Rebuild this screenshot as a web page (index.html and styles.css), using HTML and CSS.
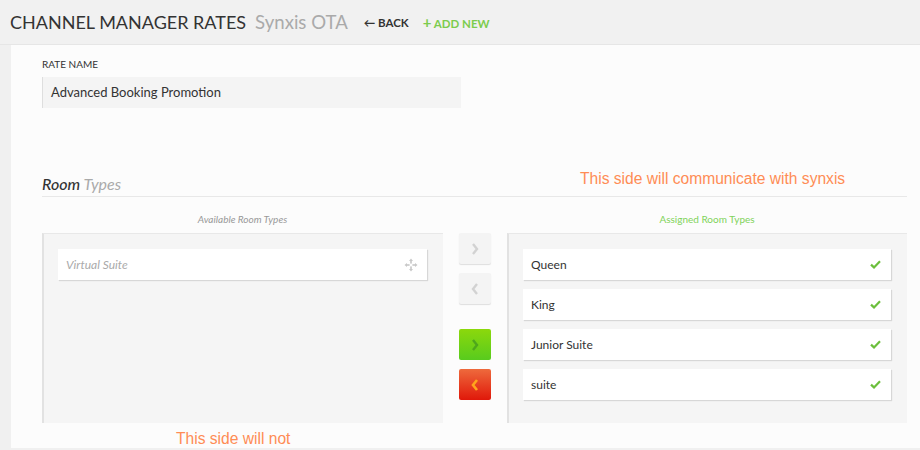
FILE: index.html
```html
<!DOCTYPE html>
<html>
<head>
<meta charset="utf-8">
<link rel="stylesheet" href="styles.css">
</head>
<body>
<header class="topbar">
  <h1 class="title">CHANNEL MANAGER RATES</h1>
  <span class="subtitle">Synxis OTA</span>
  <a class="back">&#8592; BACK</a>
  <a class="addnew"><span class="plus">+</span> ADD NEW</a>
</header>
<main class="panel">
  <div class="field">
    <label class="label">RATE NAME</label>
    <div class="input">Advanced Booking Promotion</div>
  </div>
  <div class="section">
    <h2 class="section-title"><b>Room</b> <span>Types</span></h2>
    <div class="note note-top">This side will communicate with synxis</div>
  </div>
  <div class="lists">
    <div class="col">
      <div class="col-head">Available Room Types</div>
      <div class="box">
        <div class="item avail">Virtual Suite
          <svg class="move" width="14" height="14" viewBox="0 0 14 14"><g fill="#c8c8c8"><path d="M7 0.5 L9 3 H5 Z"/><path d="M7 13.5 L9 11 H5 Z"/><path d="M0.5 7 L3 5 V9 Z"/><path d="M13.5 7 L11 5 V9 Z"/><rect x="6.2" y="3" width="1.6" height="2.6"/><rect x="6.2" y="8.4" width="1.6" height="2.6"/><rect x="3" y="6.2" width="2.6" height="1.6"/><rect x="8.4" y="6.2" width="2.6" height="1.6"/></g></svg>
        </div>
      </div>
    </div>
    <div class="buttons">
      <div class="btn btn-gray"><svg width="10" height="14" viewBox="0 0 10 14"><path d="M3 2 L7 7 L3 12" fill="none" stroke="#d2d2d2" stroke-width="2.4"/></svg></div>
      <div class="btn btn-gray"><svg width="10" height="14" viewBox="0 0 10 14"><path d="M7 2 L3 7 L7 12" fill="none" stroke="#d2d2d2" stroke-width="2.4"/></svg></div>
      <div class="btn btn-green gap"><svg width="10" height="14" viewBox="0 0 10 14"><path d="M3 2 L7 7 L3 12" fill="none" stroke="#4ea71c" stroke-width="2.4"/></svg></div>
      <div class="btn btn-red"><svg width="10" height="14" viewBox="0 0 10 14"><path d="M7 2 L3 7 L7 12" fill="none" stroke="#ffa41c" stroke-width="2.6"/></svg></div>
    </div>
    <div class="col">
      <div class="col-head green">Assigned Room Types</div>
      <div class="box box-right">
        <div class="item">Queen<svg class="check" width="11" height="9" viewBox="0 0 11 9"><path d="M1 4.6 L4 7.4 L10 1.2" fill="none" stroke="#6cbf3c" stroke-width="2.2"/></svg></div>
        <div class="item">King<svg class="check" width="11" height="9" viewBox="0 0 11 9"><path d="M1 4.6 L4 7.4 L10 1.2" fill="none" stroke="#6cbf3c" stroke-width="2.2"/></svg></div>
        <div class="item">Junior Suite<svg class="check" width="11" height="9" viewBox="0 0 11 9"><path d="M1 4.6 L4 7.4 L10 1.2" fill="none" stroke="#6cbf3c" stroke-width="2.2"/></svg></div>
        <div class="item">suite<svg class="check" width="11" height="9" viewBox="0 0 11 9"><path d="M1 4.6 L4 7.4 L10 1.2" fill="none" stroke="#6cbf3c" stroke-width="2.2"/></svg></div>
      </div>
    </div>
  </div>
  <div class="note note-bottom">This side will not</div>
</main>
</body>
</html>
```

FILE: styles.css
```css
* { box-sizing: border-box; }
html, body { margin: 0; padding: 0; }
body {
  width: 920px;
  height: 450px;
  overflow: hidden;
  background: #f0f0f0;
  font-family: Lato, "Open Sans", sans-serif;
  color: #333;
}
.topbar {
  height: 45px;
  display: flex;
  align-items: center;
  padding-left: 10px;
  background: #f1f1f1;
  border-bottom: 1px solid #e6e6e6;
}
.title {
  margin: 0;
  font-size: 18px;
  font-weight: 400;
  color: #333;
}
.subtitle {
  margin-left: 9px;
  font-size: 18.6px;
  color: #aaa;
}
.back {
  margin-left: 16px;
  font-size: 11.5px;
  font-weight: 700;
  color: #333;
}
.addnew {
  margin-left: 14px;
  font-size: 11.5px;
  font-weight: 700;
  color: #7ccc4e;
}
.plus { font-size: 15px; }
.panel {
  position: relative;
  margin-left: 11px;
  height: 403px;
  background: #fcfcfc;
  padding: 12px 13px 0 31px;
}
.field { display: flex; flex-direction: column; }
.label {
  font-size: 10px;
  color: #333;
  line-height: 14px;
}
.input {
  margin-top: 6px;
  width: 419px;
  height: 31px;
  background: #f4f4f4;
  border-left: 1px solid #dedede;
  font-size: 13px;
  line-height: 31px;
  padding-left: 8px;
  color: #333;
}
.section {
  margin-top: 66px;
  border-bottom: 1px solid #e8e8e8;
  padding-bottom: 2px;
  position: relative;
}
.section-title {
  margin: 0;
  font-size: 16px;
  font-weight: 400;
  font-style: italic;
  line-height: 20px;
}
.section-title b { font-weight: 500; color: #333; }
.section-title span { color: #aaa; }
.note {
  position: absolute;
  font-family: "Liberation Sans", Arial, sans-serif;
  font-size: 15.6px;
  color: #ff8c55;
}
.note-top { left: 538px; top: -4px; }
.note-bottom { left: 165px; top: 385px; }
.lists {
  display: grid;
  grid-template-columns: 401px 32px 400px;
  column-gap: 16px;
  margin-top: 14px;
}
.col-head {
  text-align: center;
  font-size: 10px;
  font-style: italic;
  color: #999;
  height: 22px;
  line-height: 16px;
}
.col-head.green { font-style: normal; color: #7fd35a; }
.box {
  height: 190px;
  background: #f5f5f5;
  border-left: 2px solid #e2e2e2;
  border-top: 1px solid #e8e8e8;
  padding: 15px 16px 0 14px;
  display: flex;
  flex-direction: column;
  gap: 9px;
}
.item {
  height: 31px;
  background: #fff;
  box-shadow: 1px 1px 1px rgba(0,0,0,0.12);
  display: flex;
  align-items: center;
  justify-content: space-between;
  padding: 0 10px 0 8px;
  font-size: 12px;
  color: #333;
}
.item.avail { font-style: italic; color: #aaa; padding-right: 9px; }
.buttons {
  display: flex;
  flex-direction: column;
  gap: 9px;
  padding-top: 22px;
}
.btn {
  width: 32px;
  height: 31px;
  border-radius: 2px;
  display: flex;
  align-items: center;
  justify-content: center;
}
.btn-gray { background: #f4f4f4; box-shadow: 0 1px 1px rgba(0,0,0,0.12); }
.btn-green { background: linear-gradient(#8cd80c, #58cb1e); }
.btn-red { background: linear-gradient(#ee6a3c, #e0180a); }
.gap { margin-top: 16px; }
```
